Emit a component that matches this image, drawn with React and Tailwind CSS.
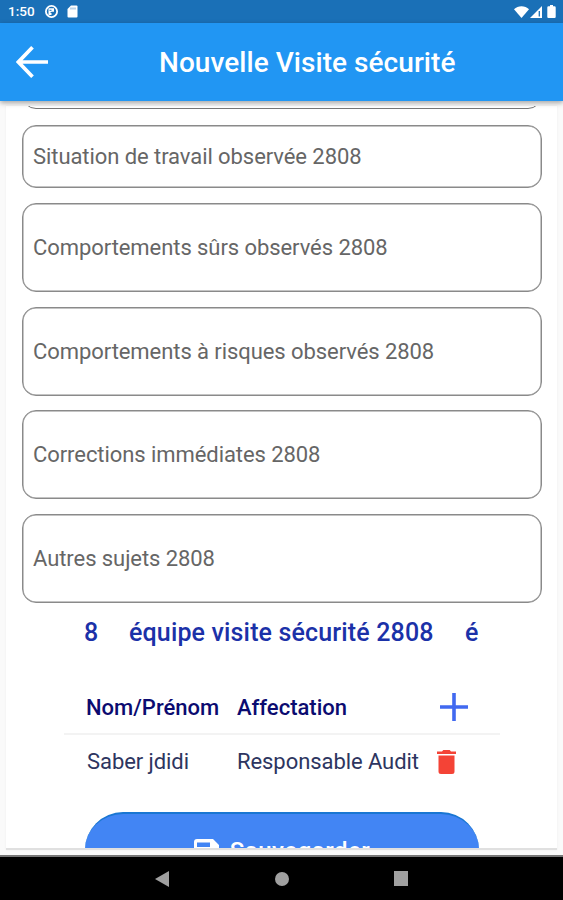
import React from 'react';

const fields = [
  { label: 'Situation de travail observée 2808', size: 'h-[63px] mb-[15px]' },
  { label: 'Comportements sûrs observés 2808', size: 'h-[89px] mb-[15px]' },
  { label: 'Comportements à risques observés 2808', size: 'h-[89px] mb-[14px]' },
  { label: 'Corrections immédiates 2808', size: 'h-[89px] mb-[15px]' },
  { label: 'Autres sujets 2808', size: 'h-[89px]' },
];

const StatusBar = () => (
  <div className="h-[23px] shrink-0 bg-[#1a70b7] flex items-center justify-between pl-[8px] pr-[7px] text-white">
    <div className="flex items-center">
      <span className="w-[37px] text-[13.5px] leading-none font-medium">1:50</span>
      <svg className="w-[13px] h-[13px] mr-[9px]" viewBox="0 0 13 13">
        <circle cx="6.5" cy="6.5" r="5.6" fill="none" stroke="white" strokeWidth="1.8" />
        <path d="M3.500 3.300h5.500v3.500H6.500V10h-3z" fill="white" />
        <path d="M5.500 7.500h3.500M4.500 5.300h2" stroke="#1a70b7" strokeWidth="1" />
      </svg>
      <svg className="w-[11px] h-[13px]" viewBox="0 0 11 13">
        <path d="M4 .5h5.500a1 1 0 0 1 1 1v10a1 1 0 0 1-1 1h-8a1 1 0 0 1-1-1V4z" fill="white" />
        <path d="M4 2.500v2M6 2.500v2M8 2.500v2" stroke="#1a70b7" strokeWidth=".6" />
      </svg>
    </div>
    <div className="flex items-center">
      <svg className="w-[15px] h-[12px] mr-[1px]" viewBox="0 0 15 12">
        <path d="M0 3.200C4-.8 11-.8 15 3.200L7.500 12z" fill="white" />
      </svg>
      <svg className="w-[12px] h-[12px] mr-[5px]" viewBox="0 0 12 12">
        <path d="M0 12 12 0v12z" fill="white" />
        <path d="M9.300 5v5.500" stroke="#1a70b7" strokeWidth="1.300" />
      </svg>
      <svg className="w-[9px] h-[13px]" viewBox="0 0 9 13">
        <path d="M3 0h3v1.300h1.500A1.200 1.200 0 0 1 8.700 2.500v9.200A1.200 1.200 0 0 1 7.500 13h-6A1.200 1.200 0 0 1 .3 11.700V2.500a1.200 1.200 0 0 1 1.200-1.200H3z" fill="white" />
      </svg>
    </div>
  </div>
);

const App = () => {
  return (
    <div className="w-[563px] h-[900px] overflow-hidden flex flex-col bg-[#fafafa] font-[Roboto,sans-serif] whitespace-nowrap">
      <StatusBar />

      <header className="relative z-10 h-[78px] shrink-0 bg-[#2196f3] flex items-center shadow-[0_2px_5px_rgba(0,0,0,0.35)]">
        <svg className="w-[32px] h-[32px] ml-[16px]" viewBox="0 0 32 32" fill="none" stroke="white" strokeWidth="3.7">
          <path d="M32 16H3M16.500 1.300 2.400 16l14.100 14.700" />
        </svg>
        <h1 className="ml-[111px] mt-px text-[28px] tracking-[0.05px] font-medium text-white">Nouvelle Visite sécurité</h1>
      </header>

      <main className="h-[744px] mt-[5px] shrink-0 mx-[6px] px-4 bg-white overflow-hidden border-b-2 border-[#e0e0e0] shadow-[0_0_2px_rgba(0,0,0,0.06)]">
        {/* bottom edge of the field scrolled under the app bar */}
        <div className="h-[3px] mb-[16px] overflow-hidden flex items-end">
          <div className="w-[520px] h-[63px] shrink-0 border-[1.5px] border-[#777] rounded-[14px]"></div>
        </div>

        {fields.map((field) => (
          <div
            key={field.label}
            className={`w-[520px] border border-[#8a8a8a] shadow-[inset_0_0_0_0.5px_#8a8a8a] rounded-[14px] flex items-center px-[10px] ${field.size}`}
          >
            <span className="text-[22px] tracking-[-0.07px] text-[#666]">{field.label}</span>
          </div>
        ))}

        <div className="flex mt-[14px] ml-[62px] h-[32px] items-center text-[25px] tracking-[0.15px] font-medium text-[#1b31a8]">
          <span className="w-[45px]">8</span>
          <span className="w-[336px]">équipe visite sécurité 2808</span>
          <span>é</span>
        </div>

        <div className="mt-[32px] ml-[42px] w-[436px]">
          <div className="flex items-center h-[54px] pl-[22px] border-b-2 border-[#f3f3f3] text-[22px] font-medium text-[#0b0b70]">
            <span className="w-[151px] mt-px">Nom/Prénom</span>
            <span className="w-[203px] mt-px">Affectation</span>
            <svg className="w-[28px] h-[28px]" viewBox="0 0 28 28" stroke="#4169f0" strokeWidth="3.6">
              <path d="M14 0v28M0 14h28" />
            </svg>
          </div>
          <div className="flex items-center h-[53px] pl-[23px] text-[22px] text-[#2d3560]">
            <span className="w-[150px] tracking-[-0.07px]">Saber jdidi</span>
            <span className="w-[200px] tracking-[-0.07px]">Responsable Audit</span>
            <svg className="w-[19px] h-[24px]" viewBox="0 0 19 24" fill="#f44336">
              <path d="M0 1.500h5L6.300 0h6.400L14 1.500h5V4H0zM1.500 5.500h16v16a2.500 2.500 0 0 1-2.500 2.500H4a2.500 2.500 0 0 1-2.500-2.500z" />
            </svg>
          </div>
        </div>

        <button className="mt-[24px] ml-[63px] w-[394px] h-[76px] rounded-[38px] border-t-2 border-[#1976d2] bg-[#4285f4] flex items-center justify-center text-white">
          <svg className="w-[25px] h-[25px] mr-[11px]" viewBox="0 0 25 25" fill="white">
            <path fillRule="evenodd" d="M3 0h16l6 6v16a3 3 0 0 1-3 3H3a3 3 0 0 1-3-3V3a3 3 0 0 1 3-3zM3 3.500V8h13V3.500z" />
          </svg>
          <span className="text-[24px] tracking-[0.5px] font-medium">Sauvegarder</span>
        </button>
      </main>

      <nav className="mt-auto h-[45px] shrink-0 bg-black border-t-2 border-[#777] flex items-center justify-center">
        <svg className="w-[14px] h-[16px] mr-[106px]" viewBox="0 0 14 16" fill="#a0a0a0">
          <path d="M14 0v16L0 8z" />
        </svg>
        <div className="w-[14px] h-[14px] mr-[105px] rounded-full bg-[#a0a0a0]"></div>
        <div className="w-[14px] h-[15px] bg-[#a0a0a0]"></div>
      </nav>
    </div>
  );
};

export default App;
